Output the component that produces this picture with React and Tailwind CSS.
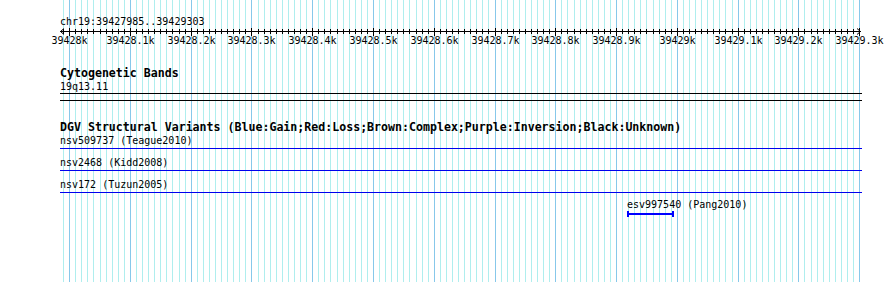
const START = 39427985
const END = 39429303
const LEFT = 60
const WIDTH = 801

const px = (bp) => LEFT + ((bp - START) * WIDTH) / (END - START)

const mono = "font-['DejaVu_Sans_Mono','Liberation_Mono',monospace]"

const gridLines = []
for (let bp = 39427990; bp <= END; bp += 10) {
  gridLines.push({ x: Math.round(px(bp)) + 0.5, major: bp % 100 === 0 })
}

const majorTicks = gridLines
  .map((l, i) => ({ ...l, bp: 39427990 + i * 10 }))
  .filter((l) => l.major)

const label = (bp) => {
  const k = bp / 1000
  return `${Number.isInteger(k) ? k : k.toFixed(1)}k`
}

function Grid() {
  return (
    <svg
      className="absolute inset-0"
      width="890"
      height="282"
      shapeRendering="crispEdges"
    >
      {gridLines.map((l) => (
        <line
          key={l.x}
          x1={l.x}
          x2={l.x}
          y1="0"
          y2="282"
          stroke={l.major ? '#87c8ea' : '#afeeee'}
          strokeWidth="1"
        />
      ))}
    </svg>
  )
}

function Ruler() {
  return (
    <svg width="890" height="20" className="block overflow-visible">
      <g stroke="#000" strokeWidth="1" shapeRendering="crispEdges">
        <line x1={LEFT} x2={LEFT + WIDTH} y1="3.5" y2="3.5" />
        {gridLines.map((l) => (
          <line
            key={l.x}
            x1={l.x}
            x2={l.x}
            y1={l.major ? 0 : 1}
            y2={l.major ? 8 : 6}
          />
        ))}
      </g>
      <g stroke="#000" strokeWidth="1" fill="none">
        <polyline points={`${LEFT + 4},0.5 ${LEFT + 0.5},3.5 ${LEFT + 4},6.5`} />
        <polyline
          points={`${LEFT + WIDTH - 4},0.5 ${LEFT + WIDTH - 0.5},3.5 ${LEFT + WIDTH - 4},6.5`}
        />
      </g>
      {majorTicks.map((t) => (
        <text
          key={t.bp}
          x={t.x}
          y="16"
          textAnchor="middle"
          fontSize="10"
          fontFamily="'DejaVu Sans Mono', 'Liberation Mono', monospace"
          fill="#000"
        >
          {label(t.bp)}
        </text>
      ))}
    </svg>
  )
}

const variants = [
  'nsv509737 (Teague2010)',
  'nsv2468 (Kidd2008)',
  'nsv172 (Tuzun2005)',
]

export default function App() {
  return (
    <div className={`relative h-[282px] w-[890px] overflow-hidden bg-white text-black ${mono}`}>
      <Grid />

      <div className="relative">
        {/* ruler */}
        <div className="pl-[60px] pt-[15px] text-[10px] leading-[13px]">
          chr19:39427985..39429303
        </div>
        <Ruler />

        {/* cytogenetic bands */}
        <div className="mt-[19px] pl-[60px]">
          <p className="text-[11.6px] font-bold leading-[13px]">
            Cytogenetic Bands
          </p>
          <p className="text-[10px] leading-[13px]">19q13.11</p>
        </div>
        <div className="ml-[60px] h-[8px] w-[802px] border-y border-black" />

        {/* DGV */}
        <div className="mt-[20px] pl-[60px]">
          <p className="text-[11.6px] font-bold leading-[13px]">
            DGV Structural Variants (Blue:Gain;Red:Loss;Brown:Complex;Purple:Inversion;Black:Unknown)
          </p>
        </div>
        {variants.map((v, i) => (
          <div key={v} className={i === 0 ? '' : 'pt-[7px]'}>
            <p className="pl-[60px] text-[10px] leading-[13px]">{v}</p>
            <div className="ml-[60px] mt-[1px] w-[802px] border-b border-[#0000ee]" />
          </div>
        ))}

        <div className="ml-[627px] mt-[5px] w-fit">
          <p className="text-[10px] leading-[13px]">esv997540 (Pang2010)</p>
          <svg width="47" height="6" className="block" shapeRendering="crispEdges">
            <rect x="0" y="0" width="2" height="6" fill="#0000ff" />
            <rect x="45" y="0" width="2" height="6" fill="#0000ff" />
            <rect x="0" y="2" width="47" height="2" fill="#0000ff" />
          </svg>
        </div>
      </div>
    </div>
  )
}
